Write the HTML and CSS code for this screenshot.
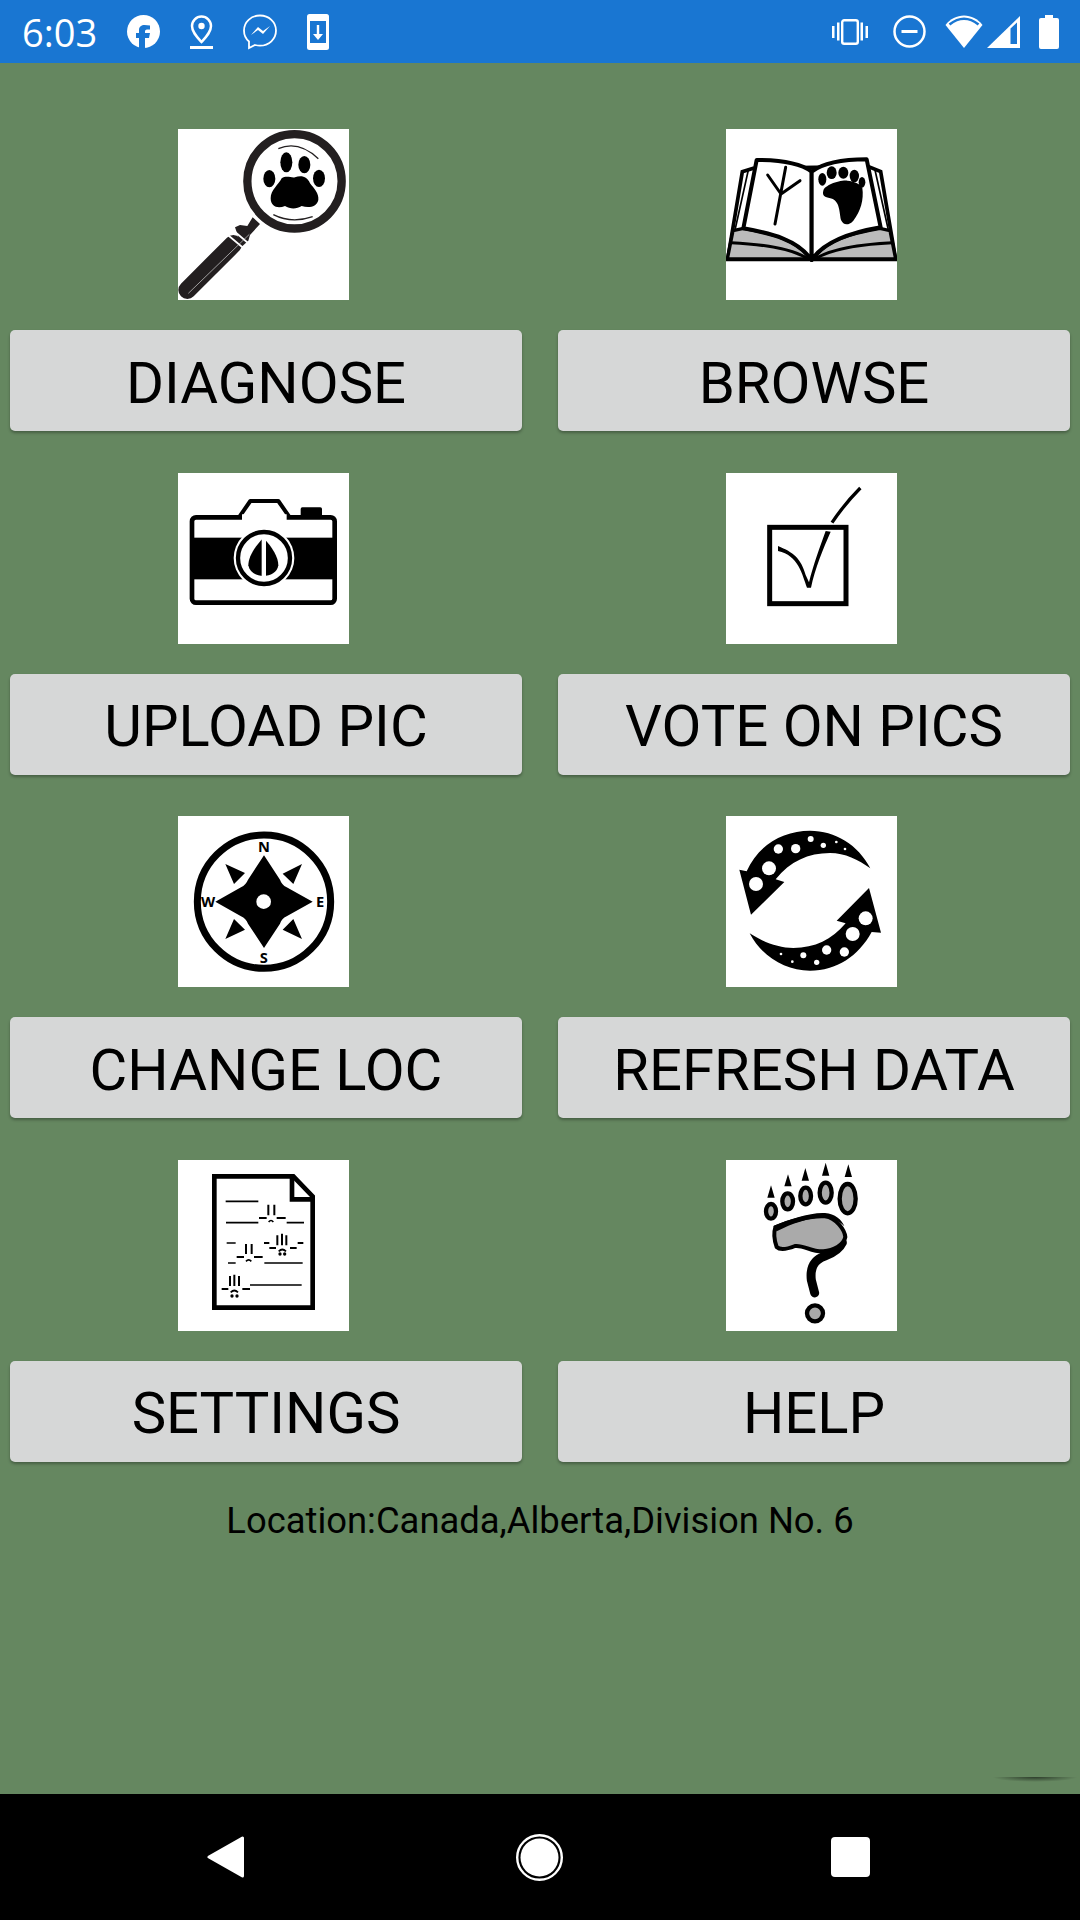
FILE: index.html
```html
<!DOCTYPE html>
<html lang="en">
<head>
  <meta charset="UTF-8" />
  <meta name="viewport" content="width=device-width, initial-scale=1.0"/>
  <title>Track Finder</title>
  <link rel="stylesheet" href="styles.css">
</head>
<body>
  <div class="screen">
    <!-- status bar -->
    <header class="status-bar">
      <div class="status-left">
        <span class="clock">6:03</span>
        <svg width="33" height="33" viewBox="0 0 33 33"><circle cx="16.5" cy="16.5" r="16.5" fill="#fff"/><path fill="#1976d2" d="M12 33V23H9v-5h3v-3c0-3.500 2.500-5 5.500-5l5.500.5v4h-3c-1.500 0-2 1-2 2V18h5l-1 5h-4v10z"/></svg>
        <svg width="23" height="34" viewBox="0 0 23 34"><path fill="none" stroke="#fff" stroke-width="2.500" d="M11.500 27C7 22 2 17 2 11a9.500 9.500 0 0 1 19 0c0 6-5 11-9.500 16z"/><circle cx="11.500" cy="11" r="3.200" fill="#fff"/><rect y="31" width="23" height="3" fill="#fff"/></svg>
        <svg width="34" height="36" viewBox="0 0 34 36"><path fill="none" stroke="#fff" stroke-width="1.800" d="M17 1.500C8 1.500 1 8 1 16.500c0 4.500 2 8.500 5 11V34l6-3c2 .5 3.500.7 5 .7 9 0 16-6.700 16-15.200S26 1.500 17 1.500z"/><path fill="#fff" d="M8 21l7-8 5 4 7-5-7 8-5-4z"/></svg>
        <svg width="22" height="36" viewBox="0 0 22 36"><rect width="22" height="36" rx="2.500" fill="#fff"/><rect x="3" y="7" width="16" height="22" fill="#1976d2"/><path fill="#fff" d="M9.800 11h2.400v9H16l-5 6-5-6h3.800z"/></svg>
      </div>
      <div class="status-right">
        <svg width="36" height="26" viewBox="0 0 36 26"><rect x="10.200" y="1.200" width="15.600" height="23.600" rx="2" fill="none" stroke="#fff" stroke-width="2.400"/><path fill="#fff" d="M0 7h2.500v12H0zM5 3.500h2.500v18H5zM28.500 3.500H31v18h-2.500zM33.500 7H36v12h-2.500z"/></svg>
        <svg class="gap-25" width="33" height="33" viewBox="0 0 33 33"><circle cx="16.500" cy="16.500" r="15" fill="none" stroke="#fff" stroke-width="2.500"/><rect x="8.500" y="15" width="16" height="3" fill="#fff"/></svg>
        <svg class="gap-19" width="38" height="33" viewBox="0 0 38 33"><path fill="#fff" d="M19 33L.5 10C5 4 12 .5 19 .5S33 4 37.500 10z"/><path fill="none" stroke="#1976d2" stroke-width="2.600" d="M4.500 9.500Q19-2 33.500 9.500"/></svg>
        <svg class="gap-4" width="33" height="32" viewBox="0 0 33 32"><path fill="#fff" d="M33 0v32H0z"/><path fill="#1976d2" d="M23.500 12.500L30 6.500V28h-6.500z"/></svg>
        <svg class="gap-19" width="20" height="34" viewBox="0 0 20 34"><path fill="#fff" d="M6 0h8v3h4a2 2 0 0 1 2 2v27a2 2 0 0 1-2 2H2a2 2 0 0 1-2-2V5a2 2 0 0 1 2-2h4z"/></svg>
      </div>
    </header>

    <main class="home">
      <div class="menu">
        <div class="menu-item">
          <div class="tile">
            <svg viewBox="24 27 513 513">
              <circle cx="373.500" cy="184" r="141.500" fill="none" stroke="#231f20" stroke-width="25"/>
              <path d="M325 86Q385 60 445 116M310 284Q365 312 428 290" fill="none" stroke="#231f20" stroke-width="4"/>
              <ellipse cx="298" cy="176" rx="18" ry="26"/>
              <ellipse cx="349" cy="127" rx="18" ry="30"/>
              <ellipse cx="403" cy="134" rx="18" ry="26"/>
              <ellipse cx="447" cy="175" rx="18" ry="26"/>
              <path d="M302 235C302 210 325 195 335 175c15-10 30 0 40-3 20-7 37-2 45 18 12 15 27 30 25 50-5 22-30 25-50 18-15 10-35 10-50 0-20 8-43 4-43-23z"/>
              <path d="M52 510L190 372" fill="none" stroke="#231f20" stroke-width="54" stroke-linecap="round"/>
              <path fill="#231f20" d="M195 322l15-7 22 3 16-26 22 20-30 33-5 17-20 18z"/>
              <path d="M170 342l50 42M192 333l42 36" fill="none" stroke="#fff" stroke-width="5"/>
              <path d="M55 520L238 343" fill="none" stroke="#ddd" stroke-width="2"/>
            </svg>
          </div>
          <button class="menu-btn">DIAGNOSE</button>
        </div>

        <div class="menu-item">
          <div class="tile">
            <svg viewBox="33 27 513 513">
              <path fill="#fff" stroke="#000" stroke-width="11" d="M115 145L82 155 38 418h504L497 155l-37-15z"/>
              <path fill="none" stroke="#000" stroke-width="5" d="M100 150L60 330M480 150l40 180"/>
              <path fill="#bbb" stroke="#000" stroke-width="10" d="M85 325c85 15 165 35 200 92H37l17-85zM495 325c-85 15-165 35-200 92h247l-17-85z"/>
              <path fill="none" stroke="#000" stroke-width="9" d="M48 368c82 4 182 17 232 49M532 368c-82 4-182 17-232 49"/>
              <path fill="#fff" stroke="#000" stroke-width="12" stroke-linejoin="round" d="M125 120c45 0 125 5 165 35v265c-40-60-120-80-205-95z"/>
              <path fill="#fff" stroke="#000" stroke-width="12" stroke-linejoin="round" d="M290 155c40-30 110-37 165-37l42 204c-77 13-167 38-207 98z"/>
              <path fill="none" stroke="#000" stroke-width="9" stroke-linecap="round" d="M212 142L180 312M158 165l40 57M255 182l-57 40"/>
              <ellipse cx="322" cy="178" rx="12" ry="19"/>
              <ellipse cx="350" cy="158" rx="15" ry="19"/>
              <ellipse cx="385" cy="158" rx="15" ry="18"/>
              <ellipse cx="418" cy="168" rx="14" ry="19"/>
              <ellipse cx="441" cy="187" rx="10" ry="16"/>
              <path d="M325 212c3-15 45-32 72-30 20 2 38 8 45 22 5 35-5 70-27 98-15 16-30 14-37-2-6-30-3-62-38-67-15-3-18-11-15-21z"/>
            </svg>
          </div>
          <button class="menu-btn">BROWSE</button>
        </div>

        <div class="menu-item">
          <div class="tile">
            <svg viewBox="24 24 513 513">
              <rect x="392" y="127" width="64" height="34" rx="5"/>
              <path fill="#fff" stroke="#000" stroke-width="12" stroke-linejoin="round" d="M207 157l34-49h84l34 49z"/>
              <rect x="66" y="157" width="428" height="256" rx="12" fill="#fff" stroke="#000" stroke-width="14"/>
              <path fill="#fff" d="M216 148h134v18H216z"/>
              <rect x="66" y="218" width="428" height="125"/>
              <circle cx="282" cy="279" r="91" fill="#fff"/>
              <circle cx="282" cy="279" r="78" fill="#fff" stroke="#000" stroke-width="13"/>
              <path d="M280 219c-28 28-45 58-45 82 4 22 24 32 45 32s42-10 45-32c0-24-17-54-45-82z"/>
              <rect x="275" y="212" width="13" height="125" fill="#fff"/>
            </svg>
          </div>
          <button class="menu-btn">UPLOAD PIC</button>
        </div>

        <div class="menu-item">
          <div class="tile">
            <svg viewBox="33 24 513 513">
              <rect x="164" y="187" width="229" height="229" fill="none" stroke="#000" stroke-width="15"/>
              <path d="M189 243c46 19 69 37 83 87l10 22c13-52 33-107 50-154l15 2c-22 50-47 110-59 168h-12c-14-38-26-98-87-110z"/>
              <path fill="none" stroke="#000" stroke-width="10" d="M351 173q38-57 85-104"/>
            </svg>
          </div>
          <button class="menu-btn">VOTE ON PICS</button>
        </div>

        <div class="menu-item">
          <div class="tile">
            <svg viewBox="24 24 513 513">
              <circle cx="282" cy="281" r="200" fill="none" stroke="#000" stroke-width="21"/>
              <path d="M282 142l48 73q5 15 20 23l78 43-78 44q-15 7-20 22l-48 73-48-73q-6-15-21-22l-77-44 77-43q15-8 21-23z"/>
              <circle cx="281" cy="281" r="22" fill="#fff"/>
              <path d="M166 168l59 27-33 33zM396 168l-58 29 32 31zM166 393l26-60 33 32zM396 393l-58-28 32-32z"/>
              <text class="compass-letter" x="282" y="131">N</text>
              <text class="compass-letter" x="114" y="296">W</text>
              <text class="compass-letter" x="450" y="296">E</text>
              <text class="compass-letter" x="281" y="465">S</text>
            </svg>
          </div>
          <button class="menu-btn">CHANGE LOC</button>
        </div>

        <div class="menu-item">
          <div class="tile">
            <svg viewBox="33 24 513 513">
              <path d="M466 181C430 110 360 68 285 68c-80 0-155 42-190 122l-22-5 35 135 100-98-26-8c43-54 98-79 163-79 45 0 85 20 121 46z"/>
              <path d="M104 376c36 69 106 112 181 112 80 0 145-43 185-116l28 2-36-134-97 98 27 8c-42 49-92 74-157 74-45 0-95-20-131-44z"/>
              <g fill="#fff">
                <circle cx="123" cy="228" r="21"/><circle cx="162" cy="181" r="21"/><circle cx="190" cy="123" r="14"/><circle cx="242" cy="122" r="14"/>
                <circle cx="287" cy="93" r="9"/><circle cx="325" cy="112" r="8"/><circle cx="364" cy="102" r="4"/><circle cx="390" cy="123" r="4"/>
                <circle cx="452" cy="331" r="21"/><circle cx="413" cy="378" r="21"/><circle cx="388" cy="432" r="14"/><circle cx="335" cy="426" r="14"/>
                <circle cx="265" cy="442" r="9"/><circle cx="305" cy="463" r="8"/><circle cx="232" cy="461" r="4"/><circle cx="198" cy="438" r="4"/>
              </g>
            </svg>
          </div>
          <button class="menu-btn">REFRESH DATA</button>
        </div>

        <div class="menu-item">
          <div class="tile">
            <svg viewBox="24 24 513 513">
              <path fill="none" stroke="#000" stroke-width="14" d="M133 73h237l58 60v334H133z"/>
              <path fill="none" stroke="#000" stroke-width="14" d="M366 73v69h62"/>
              <path fill="none" stroke="#000" stroke-width="5" d="M167 148h98M168 212h97M350 212h52M170 273h27M174 333h23M283 333h115M240 399h155"/>
              <path fill="none" stroke="#000" stroke-width="6" d="M295 158v32M313 158v32M267 198h23M320 198h27M228 276v30M245 276v30M200 315h22M252 315h26"/>
              <path fill="none" stroke="#000" stroke-width="6" d="M322 250v30M336 245v35M349 250v30M282 273h16M298 288h20M360 288h20M383 273h17M180 372v30M193 368v34M207 372v30M155 411h20M217 411h23"/>
              <path fill="none" stroke="#000" stroke-width="5" d="M296 210q7-9 14 0M228 328q8-9 16 0M326 298q11-11 22 0M182 421q11-11 22 0"/>
              <circle cx="330" cy="306" r="5"/><circle cx="344" cy="306" r="5"/>
              <circle cx="186" cy="432" r="5"/><circle cx="201" cy="432" r="5"/>
            </svg>
          </div>
          <button class="menu-btn">SETTINGS</button>
        </div>

        <div class="menu-item">
          <div class="tile">
            <svg viewBox="33 24 513 513">
              <g fill="#aaa" stroke="#000" stroke-width="13">
                <ellipse cx="168" cy="178" rx="15" ry="22"/>
                <ellipse cx="218" cy="148" rx="16" ry="24"/>
                <ellipse cx="272" cy="132" rx="16" ry="25"/>
                <ellipse cx="332" cy="122" rx="18" ry="30"/>
                <ellipse cx="398" cy="140" rx="24" ry="44"/>
              </g>
              <path d="M168 100l11 37h-22zM219 67l11 36h-22zM271 48l11 38h-22zM332 32l11 39h-22zM400 37l11 38h-22z"/>
              <!-- question stem runs under the pad outline -->
              <path fill="none" stroke="#000" stroke-width="27" stroke-linecap="round" d="M382 272c-10 22-30 32-52 40-35 12-45 37-41 72l10 39"/>
              <path fill="#aaa" stroke="#000" stroke-width="12" stroke-linejoin="round" d="M181 226c45-20 109-36 149-33 35 5 59 42 61 62-5 25-36 41-66 43-35 2-60-20-85-16-20 8-45 13-55 3-7-20-9-44-4-59z"/>
              <path d="M175 222c45-20 115-42 155-39 30 2 50 20 58 40-20-20-40-28-65-27-45 3-90 18-138 42z"/>
              <circle cx="300" cy="484" r="24" fill="#aaa" stroke="#000" stroke-width="13"/>
            </svg>
          </div>
          <button class="menu-btn">HELP</button>
        </div>
      </div>

      <p class="location">Location:Canada,Alberta,Division No. 6</p>
      <div class="toast-shadow"></div>
    </main>

    <!-- android nav buttons -->
    <nav class="nav-bar">
      <svg width="37" height="42" viewBox="0 0 37 42"><path fill="#fff" stroke="#fff" stroke-width="3" stroke-linejoin="round" d="M35.500 2v38L2 21z"/></svg>
      <svg class="nav-home" width="47" height="47" viewBox="0 0 47 47"><circle cx="23.500" cy="23.500" r="22.300" fill="none" stroke="#fff" stroke-width="2.400"/><circle cx="23.500" cy="23.500" r="19" fill="#fff"/></svg>
      <div class="nav-recent"></div>
    </nav>
  </div>
</body>
</html>
```

FILE: styles.css
```css
body {
  margin: 0;
  font-family: Roboto, sans-serif;
  color: #000;
}

.screen {
  width: 1080px;
  height: 1920px;
  display: flex;
  flex-direction: column;
  overflow: hidden;
}

.status-bar {
  height: 63px;
  background-color: #1976d2;
  display: flex;
  justify-content: space-between;
  align-items: center;
  padding: 0 21px 0 22px;
  flex-shrink: 0;
}

.status-left,
.status-right {
  display: flex;
  align-items: center;
}

.status-left {
  gap: 30px;
}

.clock {
  width: 75px;
  color: white;
  font-family: "Open Sans", sans-serif;
  font-size: 38px;
  white-space: nowrap;
}

.gap-25 {
  margin-left: 25px;
}

.gap-19 {
  margin-left: 19px;
}

.gap-4 {
  margin-left: 4px;
}

.home {
  flex: 1;
  position: relative;
  background-color: #658760;
  padding: 66px 10px 0;
}

.menu {
  display: grid;
  grid-template-columns: 512px 512px;
  column-gap: 36px;
  row-gap: 41.67px;
}

.menu-item {
  display: flex;
  flex-direction: column;
}

.tile {
  width: 171px;
  height: 171px;
  background-color: white;
  align-self: center;
  margin: 0 5px 30px 0;
}

.tile svg {
  display: block;
  width: 100%;
  height: 100%;
}

.compass-letter {
  font-family: "Open Sans", sans-serif;
  font-size: 44px;
  font-weight: 700;
  text-anchor: middle;
}

.menu-btn {
  height: 101px;
  padding: 4px 0 0;
  border: none;
  border-radius: 5px;
  background-color: #d6d7d7;
  box-shadow: 0 2px 3px rgba(0, 0, 0, 0.3);
  color: #000;
  font-family: Roboto, sans-serif;
  font-size: 58px;
}

.location {
  margin: 37px 0 0;
  text-align: center;
  font-size: 36.4px;
}

.toast-shadow {
  position: absolute;
  right: 2px;
  bottom: 12px;
  width: 86px;
  height: 5px;
  border-radius: 0 0 50% 50% / 0 0 100% 100%;
  background: radial-gradient(ellipse at 50% 0, rgba(0, 0, 0, 0.55), rgba(0, 0, 0, 0) 70%);
}

.nav-bar {
  height: 126px;
  background-color: black;
  display: flex;
  align-items: center;
  padding-left: 207px;
  flex-shrink: 0;
}

.nav-home {
  margin-left: 272px;
}

.nav-recent {
  width: 39px;
  height: 40px;
  margin-left: 268px;
  border-radius: 4px;
  background-color: white;
}
```
